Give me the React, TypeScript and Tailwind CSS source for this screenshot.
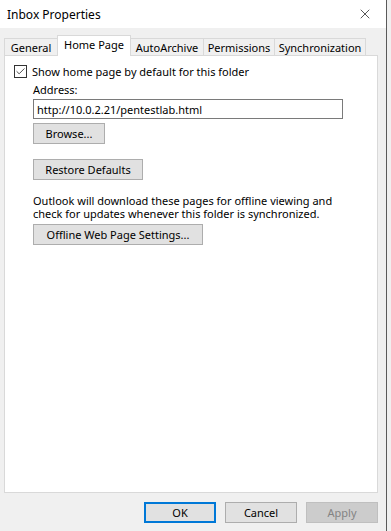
import { Check, X } from 'lucide-react';

const tabs = [
  { label: 'General', w: 'w-[54px]' },
  { label: 'Home Page', w: 'w-[74px]' },
  { label: 'AutoArchive', w: 'w-[74px]' },
  { label: 'Permissions', w: 'w-[72px]' },
  { label: 'Synchronization', w: 'w-[92px]' },
];

function Btn({ label, className = '' }: { label: string; className?: string }) {
  return (
    <div
      className={`flex items-center justify-center h-[21px] border border-[#adadad] bg-[#e1e1e1] text-[11px] leading-[15px] text-black ${className}`}
    >
      {label}
    </div>
  );
}

export default function App() {
  return (
    <div
      className="w-[391px] h-[531px] flex bg-[#f0f0f0] text-black overflow-hidden text-[11px] leading-[15px]"
      style={{ fontFamily: '"Segoe UI", "Noto Sans", "Open Sans", sans-serif' }}
    >
      <div className="w-[386px] h-full flex flex-col">
        {/* Title bar */}
        <div className="h-[28px] bg-white flex items-center justify-between pl-[7px] pr-[13px] shrink-0">
          <span className="text-[12px]">Inbox Properties</span>
          <X size={16} strokeWidth={1} />
        </div>

        {/* Tabs */}
        <div className="mt-[7px] pl-[4px] flex items-end h-[20px] relative z-10 whitespace-nowrap">
          {tabs.map((t) =>
            t.label === 'Home Page' ? (
              <div
                key={t.label}
                className={`${t.w} h-[21px] -mb-px -ml-px pt-[1px] flex justify-center items-start bg-white border border-b-0 border-[#d9d9d9]`}
              >
                {t.label}
              </div>
            ) : (
              <div
                key={t.label}
                className={`${t.w} h-[17px] flex justify-center items-center border border-b-0 border-[#d9d9d9] -ml-px first:ml-0 bg-[#f0f0f0]`}
              >
                {t.label}
              </div>
            )
          )}
        </div>

        {/* Panel */}
        <div className="ml-[4px] w-[374px] h-[438px] bg-white border border-[#d9d9d9] pt-[8px] pl-[9px]">
          <div className="flex items-center gap-[5px] h-[15px]">
            <div className="w-[13px] h-[13px] border border-[#333] flex items-center justify-center">
              <Check size={11} strokeWidth={1.5} />
            </div>
            <span>Show home page by default for this folder</span>
          </div>
          <div className="pl-[19px]">
            <div className="mt-[3px]">Address:</div>
            <div className="mt-[2px] w-[310px] h-[20px] border border-[#7a7a7a] flex items-center px-[3px]">
              http://10.0.2.21/pentestlab.html
            </div>
            <Btn label="Browse..." className="mt-[4px] w-[72px]" />
            <Btn label="Restore Defaults" className="mt-[15px] w-[110px]" />
            <div className="mt-[14px] leading-[13px]">
              Outlook will download these pages for offline viewing and
              <br />
              check for updates whenever this folder is synchronized.
            </div>
            <Btn label="Offline Web Page Settings..." className="mt-[4px] w-[170px]" />
          </div>
        </div>

        {/* Footer */}
        <div className="mt-[9px] flex justify-end gap-[9px] pr-[8px]">
          <div className="w-[72px] h-[21px] border-2 border-[#0078d7] bg-[#e1e1e1] flex items-center justify-center">
            OK
          </div>
          <Btn label="Cancel" className="w-[72px]" />
          <div className="w-[72px] h-[21px] border border-[#bfbfbf] bg-[#cccccc] text-[#838383] flex items-center justify-center">
            Apply
          </div>
        </div>
      </div>
      <div className="w-[1px] h-full bg-[#5a5a5a]" />
      <div className="flex-1 h-full bg-[#f0f0f0]" />
    </div>
  );
}
